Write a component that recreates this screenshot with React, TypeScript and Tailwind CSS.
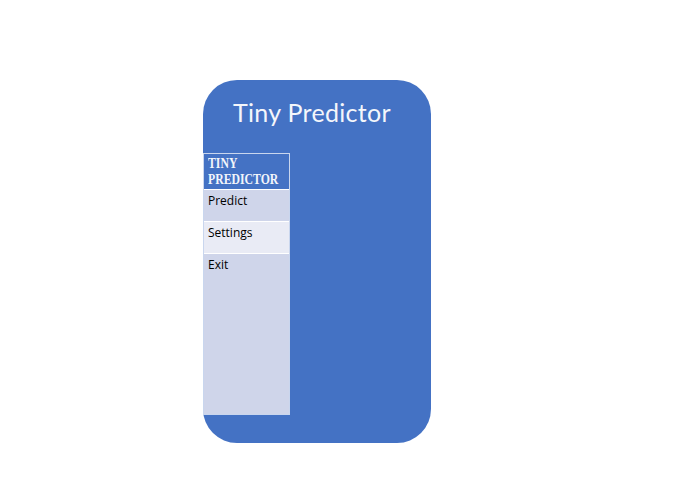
export default function App() {
  const items = ["Predict", "Settings", "Exit"];

  return (
    <div className="w-[695px] h-[494px] bg-white pt-[80px] pl-[203px]">
      <div className="w-[228px] h-[363px] rounded-[34px] bg-[#4472c4] flex flex-col">
        <h1 className="h-[73px] pt-[14px] pl-[30px] text-[25px] leading-[36px] text-[#f4f6fb] font-['Lato',sans-serif] tracking-[0.3px]">
          Tiny Predictor
        </h1>

        <nav className="w-[87px] h-[262px] flex flex-col border border-[#c9d6ee] font-['Open_Sans',sans-serif]">
          <div className="h-[36px] bg-[#4472c4] border-b border-white px-[4px] pt-[2px] font-['Liberation_Serif',serif] font-bold text-[14px] leading-[16px] text-[#f2f5fb]">
            <span className="block origin-left scale-x-[0.84]">
              TINY
              <br />
              PREDICTOR
            </span>
          </div>
          {items.map((label, i) => (
            <div
              key={label}
              className={`px-[4px] pt-[3px] text-[12px] leading-[16px] text-black ${
                i === 2 ? "flex-1" : "h-[32px] border-b border-white"
              } ${i === 1 ? "bg-[#e9ebf5]" : "bg-[#cfd5ea]"}`}
            >
              {label}
            </div>
          ))}
        </nav>
      </div>
    </div>
  );
}
